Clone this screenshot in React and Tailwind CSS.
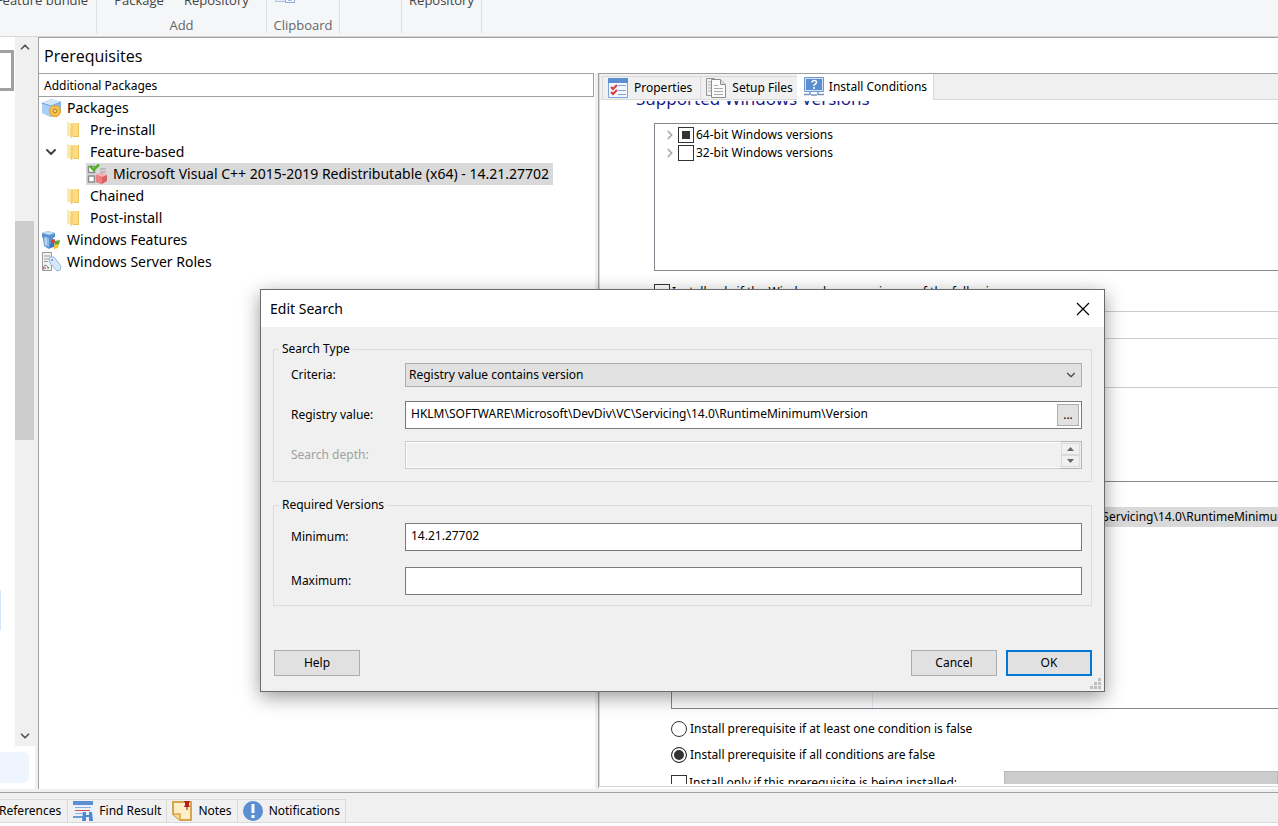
import { useState } from 'react';
import { ChevronDown, ChevronRight, ChevronUp } from 'lucide-react';

const segoe = "font-['Noto_Sans',sans-serif]";

function FolderIcon() {
    return (
        <svg width="20" height="20" viewBox="0 0 20 20">
            <path d="M8 3h6v14H8z" fill="#efc35c" />
            <path d="M8 3h5v13H8z" fill="#fbdc85" />
            <path d="M2 2l5 1.500V15l-2 1-3 .500z" fill="#fdeaa9" />
            <path d="M6 3l2 .500V15l-1 3.500-2-2z" fill="#f5d176" />
        </svg>
    );
}

function PackagesIcon() {
    return (
        <svg width="20" height="20" viewBox="0 0 20 20">
            <path d="M0 5l9-4 10 3v11l-10 4-9-4z" fill="#83b6f2" />
            <path d="M0 5l9-4 10 3-10 4z" fill="#d3e7fb" />
            <path d="M0 5l9 3v11l-9-4z" fill="#a9cef8" />
            <path d="M0 5l9 3 10-4" fill="none" stroke="#6fa3df" />
            <circle cx="13" cy="13" r="5.500" fill="#f5bd41" stroke="#eeb040" strokeWidth="1.500" strokeDasharray="2 1" />
            <circle cx="13" cy="13" r="5" fill="#fac850" stroke="#e3a436" />
            <circle cx="13" cy="13" r="2" fill="#f3d28a" stroke="#a8761b" />
        </svg>
    );
}

function RedistIcon() {
    return (
        <svg width="20" height="20" viewBox="0 0 20 20">
            <path d="M1.500 2.500h6v6h-6zM1.500 12h6v6h-6z" fill="#fff" stroke="#8d8d8d" strokeWidth="1.500" />
            <path d="M13 5h6M13 8h6" stroke="#9b9b9b" />
            <path d="M3 2l3.500 4L12 .500" fill="none" stroke="#4fb51b" strokeWidth="2.500" />
            <path d="M9 11l5-2 6 2v6l-5 3-6-2z" fill="#dc5f62" />
            <path d="M9 11l5-2 6 2-5 2z" fill="#f7b3b3" />
            <path d="M9 11l6 2v7l-6-2z" fill="#ec8181" />
        </svg>
    );
}

function FeaturesIcon() {
    return (
        <svg width="20" height="20" viewBox="0 0 20 20">
            <path d="M0 3l6-2 7 2v4l-2 1 1 8-5 3-5-3-1-8-1-1z" fill="#5b93d0" />
            <path d="M0 3l6-2 7 2-6 2z" fill="#c3dcf5" />
            <path d="M2 7l5 1v9l-5-3z" fill="#8db9e6" />
            <path d="M4 7v9" stroke="#e1f0fd" />
            <path d="M9 10l4-1v4l-4 1z" fill="#d9402f" />
            <path d="M13 11l5-1-1 5-5 1z" fill="#58a83c" />
            <path d="M8 14l4-1v4l-4 1z" fill="#3873cc" />
            <path d="M12 15l5-1-1 4-4 1z" fill="#f3c72c" />
        </svg>
    );
}

function RolesIcon() {
    return (
        <svg width="20" height="20" viewBox="0 0 20 20">
            <path d="M.500.500h9v18h-9z" fill="#f2f2f2" stroke="#999" />
            <path d="M2 4h6M2 7h5M2 9.500h4" stroke="#9c9c9c" />
            <path d="M7 7l1-2 4 0 7 9-1 4-3 1-7-8z" fill="#d8e8fa" stroke="#92b7e4" />
            <circle cx="10" cy="8" r="1" fill="#6c98d1" />
            <path d="M1 18l1-4 2-1 3 3" fill="none" stroke="#888" />
            <path d="M2 16h2" stroke="#d33" />
            <path d="M5 16h2" stroke="#3a3" />
        </svg>
    );
}

function PropertiesIcon() {
    return (
        <svg width="20" height="20" viewBox="0 0 20 20">
            <path d="M.500.500h19v19H.500z" fill="#f4f8fd" stroke="#7aa5dc" />
            <path d="M0 0h20v5H0z" fill="#5b8fd2" />
            <path d="M10 7.500h8M10 12.500h8M10 16.500h8" stroke="#7aa5dc" />
            <path d="M3 9l2 2 4-4M3 14l2 2 4-4" fill="none" stroke="#dc3b3b" strokeWidth="2" />
        </svg>
    );
}

function SetupFilesIcon() {
    return (
        <svg width="20" height="20" viewBox="0 0 20 20">
            <path d="M.500.500h8v17h-8z" fill="#f2f2f2" stroke="#969696" />
            <path d="M2 4h3M2 7h3M2 10h3M2 13h3" stroke="#aaa" />
            <path d="M5.500 1.500h9l5 5v13h-14z" fill="#fafafa" stroke="#8d8d8d" />
            <path d="M14.500 1.500v5h5" fill="#ddd" stroke="#8d8d8d" />
            <path d="M8 7.500h4M8 10.500h9M8 13.500h9M8 16.500h9" stroke="#a8a8a8" />
        </svg>
    );
}

function ConditionsIcon() {
    return (
        <svg width="20" height="20" viewBox="0 0 20 20">
            <path d="M.500.500h19v14H.500z" fill="#d4e2f4" stroke="#6d97d0" />
            <path d="M2 2h16v11H2z" fill="#5b8fd2" />
            <path d="M8 5.500c0-3 5-2.500 4.500 0C12.200 7 10 7 10 9M10 10v2" fill="none" stroke="#fff" strokeWidth="1.500" />
            <path d="M6 15v3M14 15v3M0 17.500h6M14 17.500h6M7 18h6" stroke="#7795bd" strokeWidth="1.500" />
        </svg>
    );
}

function FindIcon() {
    return (
        <svg width="20" height="20" viewBox="0 0 20 20">
            <path d="M0 0h20v17H0z" fill="#e9f1fb" />
            <path d="M0 0h20v4H0z" fill="#5b8fd2" />
            <path d="M2 6.500h16M2 12.500h9" stroke="#8dafdc" />
            <path d="M2 9.500h15" stroke="#dd4a4a" />
            <path d="M0 15h10v2H0z" fill="#6d9ad5" />
            <path d="M10 11h3v3h3v-3h3l1 9h-4v-4h-3v4H9z" fill="#4f88cf" />
        </svg>
    );
}

function NotesIcon() {
    return (
        <svg width="20" height="20" viewBox="0 0 20 20">
            <path d="M1 1h18v18H8l-7-6z" fill="#fdedc9" stroke="#d9a54a" strokeWidth="2" />
            <path d="M1 13h7v6" fill="#fbdc9a" stroke="#d9a54a" strokeWidth="1.500" />
            <path d="M12 0h6l-1 2v2l1 2h-6l1-2V2z" fill="#b81d1d" />
            <path d="M15 6v3" stroke="#8d1111" />
        </svg>
    );
}

function NotificationsIcon() {
    return (
        <svg width="20" height="20" viewBox="0 0 20 20">
            <circle cx="10" cy="10" r="10" fill="#5b8fd2" />
            <path d="M8.500 3h3v9h-3zM8.500 14h3v3h-3z" fill="#fff" />
        </svg>
    );
}

const tree = [
    { label: 'Packages', icon: <PackagesIcon />, pad: 'pl-[3px]' },
    { label: 'Pre-install', icon: <FolderIcon />, pad: 'pl-[26px]' },
    { label: 'Feature-based', icon: <FolderIcon />, pad: 'pl-1', open: true },
    { label: 'Microsoft Visual C++ 2015-2019 Redistributable (x64) - 14.21.27702', icon: <RedistIcon />, pad: 'pl-[47px]', selected: true },
    { label: 'Chained', icon: <FolderIcon />, pad: 'pl-[26px]' },
    { label: 'Post-install', icon: <FolderIcon />, pad: 'pl-[26px]' },
    { label: 'Windows Features', icon: <FeaturesIcon />, pad: 'pl-[3px]' },
    { label: 'Windows Server Roles', icon: <RolesIcon />, pad: 'pl-[3px]' },
];

const registryPath = 'HKLM\\SOFTWARE\\Microsoft\\DevDiv\\VC\\Servicing\\14.0\\RuntimeMinimum\\Version';

function RibbonGroup({ width, label, children }) {
    return (
        <div className={`${width} h-[33px] shrink-0 flex flex-col justify-end gap-[9px] border-r border-[#dcdee0] text-center whitespace-nowrap`}>
            <div className="h-4 shrink-0 leading-4 flex justify-center gap-5 text-[#444]">{children}</div>
            <div className="h-4 shrink-0 leading-4 text-[#666]">{label}</div>
        </div>
    );
}

function Ribbon() {
    return (
        <header className="font-['Open_Sans',sans-serif] h-[37px] shrink-0 flex overflow-hidden bg-[#f4f6f8] border-b border-[#d5d7d9] text-[13px]">
            <RibbonGroup width="w-[97px]"><button className="mr-3">Feature bundle</button></RibbonGroup>
            <RibbonGroup width="w-[170px]" label="Add">
                <button>Package</button>
                <button>Repository</button>
            </RibbonGroup>
            <RibbonGroup width="w-[73px]" label="Clipboard">
                <button aria-label="Copy" className="mr-9">
                    <svg width="20" height="16" viewBox="0 0 20 16">
                        <path d="M.500 1.500h12v8H.500z" fill="#e8effa" stroke="#aabfdf" />
                        <path d="M10.500 1.500h9v9h-9z" fill="#f4f8fd" stroke="#8ea9d6" />
                        <path d="M13 8.500h4" stroke="#a5bce0" />
                    </svg>
                </button>
            </RibbonGroup>
            <RibbonGroup width="w-[62px]" />
            <RibbonGroup width="w-[80px]"><button>Repository</button></RibbonGroup>
        </header>
    );
}

function SideStrip() {
    return (
        <aside className="w-[38px] shrink-0 flex flex-col bg-[#f0f0f0]">
            <div className="flex-1 flex">
                <div className="w-[15px] bg-white pt-[13px]">
                    <div className="w-[14px] h-[41px] border-[3px] border-l-0 border-[#a0a0a0]" />
                    <div className="w-px h-10 mt-[499px] bg-[#d5e4fb]" />
                </div>
                <div className="w-[19px] flex flex-col items-center">
                    <button aria-label="Scroll up" className="h-5 flex items-center"><ChevronUp size={14} strokeWidth={3} color="#555" /></button>
                    <div className="w-full h-[219px] mt-[164px] bg-[#cdcdcd]" />
                    <button aria-label="Scroll down" className="mt-auto h-5 flex items-center"><ChevronDown size={14} strokeWidth={3} color="#555" /></button>
                </div>
            </div>
            <div className="w-[35px] h-[43px] bg-white pt-[6px]">
                <div className="w-[29px] h-[31px] rounded-r-md bg-[#eef5ff]" />
            </div>
        </aside>
    );
}

function PackageTree() {
    return (
        <section className="w-[556px] shrink-0 bg-white">
            <h2 className="mr-px h-6 leading-6 pl-[5px] border-y border-r border-[#a0a0a0]">Additional Packages</h2>
            <ul className={`${segoe} text-[14px] leading-5`}>
                {tree.map(item => (
                    <li key={item.label} className={`h-[22px] flex items-center ${item.pad}`}>
                        {item.open && <ChevronDown size={16} strokeWidth={3} color="#444" className="mr-[6px]" />}
                        <button className={`h-[22px] flex items-center pr-1 whitespace-nowrap ${item.selected ? 'pl-px gap-[6px] bg-[#d9d9d9]' : 'gap-[5px]'}`}>
                            {item.icon}
                            <span>{item.label}</span>
                        </button>
                    </li>
                ))}
            </ul>
        </section>
    );
}

const box = 'appearance-none size-4 shrink-0 border border-[#333] bg-white checked:bg-[#333]';

function Check({ label, ...props }) {
    return (
        <label className="flex items-center gap-[2px] whitespace-nowrap">
            <input type="checkbox" className={`${box} checked:shadow-[inset_0_0_0_3px_white]`} {...props} />
            {label}
        </label>
    );
}

function Radio({ label, ...props }) {
    return (
        <label className="h-[18px] flex items-center gap-[3px] whitespace-nowrap">
            <input type="radio" name="rule" className={`${box} rounded-full checked:shadow-[inset_0_0_0_2px_white]`} {...props} />
            {label}
        </label>
    );
}

function ConditionsPanel() {
    const [rule, setRule] = useState('all');

    return (
        <section className="flex-1 min-w-0 flex flex-col border-l border-t border-[#a0a0a0] border-b-2 border-b-white bg-[#f0f0f0]">
            <div role="tablist" className="h-[26px] shrink-0 flex items-end pl-[2px] border-l border-[#d9d9d9] whitespace-nowrap">
                <button role="tab" className="h-6 flex items-center gap-[6px] pl-[5px] pr-2 border border-r-0 border-[#d9d9d9]"><PropertiesIcon />Properties</button>
                <button role="tab" className="h-6 flex items-center gap-[6px] pl-[5px] pr-1 border border-r-0 border-[#d9d9d9]"><SetupFilesIcon />Setup Files</button>
                <button role="tab" aria-selected="true" className="h-[26px] flex items-center gap-[5px] pl-[7px] pr-[6px] border-r border-[#d9d9d9] bg-white"><ConditionsIcon />Install Conditions</button>
                <div className="flex-1 self-stretch border-b border-[#d9d9d9]" />
            </div>
            <div className="flex-1 min-h-0 flex flex-col pb-[2px] bg-white border-l border-b border-[#d9d9d9]">
                <div className="flex-1 min-h-0 mt-px pl-[54px] flex flex-col overflow-hidden">
                    <div className="h-[22px] shrink-0 flex flex-col">
                        <h2 className="-mt-3 -ml-[18px] h-5 leading-5 text-[17px] text-[#1a1a8c]">Supported Windows Versions</h2>
                    </div>
                    <ul className="h-[148px] shrink-0 border border-r-0 border-[#828790] pt-[2px] pl-2">
                        <li className="h-[18px] flex items-center gap-[1px]"><ChevronRight size={14} strokeWidth={3} color="#aaa" /><Check label="64-bit Windows versions" defaultChecked /></li>
                        <li className="h-[18px] flex items-center gap-[1px]"><ChevronRight size={14} strokeWidth={3} color="#aaa" /><Check label="32-bit Windows versions" /></li>
                    </ul>
                    <div className="mt-3 h-[18px] shrink-0"><Check label="Install only if the Windows language is one of the following:" /></div>
                    <div className="mt-[10px] h-[27px] shrink-0 border-t border-[#ccc]" />
                    <div className="h-[50px] shrink-0 border-y border-[#ccc]" />
                    <div className="mt-[93px] ml-[17px] h-[228px] shrink-0 flex border border-r-0 border-[#828790]">
                        <div className="w-[201px] shrink-0 flex flex-col border-r border-[#e2edf8]" />
                        <div className="flex-1 min-w-0 pt-[25px]">
                            <div className="h-5 leading-5 pl-[5px] overflow-hidden whitespace-nowrap bg-[#d9d9d9]">{registryPath}</div>
                        </div>
                    </div>
                    <div className="mt-[11px] ml-[17px] shrink-0 flex flex-col gap-2">
                        <Radio label="Install prerequisite if at least one condition is false" checked={rule === 'any'} onChange={() => setRule('any')} />
                        <Radio label="Install prerequisite if all conditions are false" checked={rule === 'all'} onChange={() => setRule('all')} />
                    </div>
                    <div className="mt-[7px] ml-[17px] shrink-0 flex items-start">
                        <div className="w-[333px] shrink-0 mt-[3px]"><Check label="Install only if this prerequisite is being installed:" /></div>
                        <select disabled aria-label="Prerequisite" className="appearance-none flex-1 h-6 bg-[#ccc] border border-[#bababa]" />
                    </div>
                </div>
            </div>
        </section>
    );
}

const bottomTabs = [
    { label: 'References' },
    { label: 'Find Result', icon: <FindIcon /> },
    { label: 'Notes', icon: <NotesIcon /> },
    { label: 'Notifications', icon: <NotificationsIcon /> },
];

function BottomTabs() {
    return (
        <footer className="mt-[3px] h-[31px] shrink-0 flex items-end border-t border-b border-t-[#a0a0a0] border-b-[#d9d9d9]">
            {bottomTabs.map(tab => (
                <button key={tab.label} className={`h-[23px] flex items-center gap-[6px] border-t border-r border-[#d9d9d9] ${tab.icon ? 'pl-[5px] pr-[5px]' : 'pr-[6px] -ml-px'}`}>
                    {tab.icon}
                    {tab.label}
                </button>
            ))}
        </footer>
    );
}

const field = 'w-full h-7 px-[5px] pb-1 bg-white border border-[#7a7a7a] outline-none';
const button = 'w-[86px] h-[26px] bg-[#e1e1e1]';

function Row({ id, label, disabled, children }) {
    return (
        <div className="flex items-center">
            <label htmlFor={id} className={`w-[114px] shrink-0 ${disabled ? 'text-[#a0a0a0]' : ''}`}>{label}</label>
            <div className="flex-1 relative">{children}</div>
        </div>
    );
}

function EditSearchDialog() {
    const [path, setPath] = useState(registryPath);
    const [minimum, setMinimum] = useState('14.21.27702');
    const [maximum, setMaximum] = useState('');

    return (
        <div role="dialog" aria-label="Edit Search" className="absolute left-[260px] top-[289px] w-[845px] bg-[#f0f0f0] border border-[#6b6b6b] shadow-[0_5px_18px_rgba(0,0,0,0.4)]">
            <div className={`${segoe} h-[37px] flex items-center justify-between pl-[9px] pr-[14px] bg-white text-[14px]`}>
                <h1>Edit Search</h1>
                <button aria-label="Close">
                    <svg width="14" height="14" viewBox="0 0 14 14"><path d="M1 1l12 12M13 1L1 13" stroke="#000" strokeWidth="1.200" /></svg>
                </button>
            </div>

            <form className="px-3 pb-[15px] pt-[14px]" onSubmit={e => e.preventDefault()}>
                <fieldset className="border border-[#dcdcdc] pl-[17px] pr-[9px] pb-3">
                    <legend className="-ml-[12px] px-[3px] h-4 leading-4">Search Type</legend>
                    <div className="mt-[6px] flex flex-col">
                        <Row id="criteria" label="Criteria:">
                            <select id="criteria" className="appearance-none w-full h-6 px-[3px] bg-[#e1e1e1] border border-[#adadad]">
                                <option>Registry value contains version</option>
                            </select>
                            <ChevronDown size={14} strokeWidth={2} color="#444" className="absolute right-1 top-[5px] pointer-events-none" />
                        </Row>
                        <div className="mt-[14px]">
                            <Row id="path" label="Registry value:">
                                <input id="path" className={field} value={path} onChange={e => setPath(e.target.value)} />
                                <button type="button" aria-label="Browse" className="absolute right-[3px] top-[3px] w-[22px] h-[22px] bg-[#e1e1e1] border border-[#adadad] leading-4">...</button>
                            </Row>
                        </div>
                        <div className="mt-3">
                            <Row id="depth" label="Search depth:" disabled>
                                <input id="depth" disabled className="block w-full h-7 bg-[#f0f0f0] border border-[#ccc] shadow-[inset_0_0_0_1px_white]" />
                                <div className="absolute right-0 top-0 w-[22px] h-7 p-px flex flex-col border border-l-0 border-[#b5b5b5] bg-[#f0f0f0]">
                                    <button type="button" disabled aria-label="Increase" className="flex-1 flex items-center justify-center border border-[#dadada]">
                                        <svg width="7" height="4" viewBox="0 0 7 4"><path d="M0 4l3.500-4L7 4z" fill="#666" /></svg>
                                    </button>
                                    <button type="button" disabled aria-label="Decrease" className="flex-1 flex items-center justify-center border border-[#dadada]">
                                        <svg width="7" height="4" viewBox="0 0 7 4"><path d="M0 0l3.500 4L7 0z" fill="#666" /></svg>
                                    </button>
                                </div>
                            </Row>
                        </div>
                    </div>
                </fieldset>

                <fieldset className="mt-[15px] border border-[#dcdcdc] pl-[17px] pr-[9px] pb-[10px]">
                    <legend className="-ml-[12px] px-[3px] h-4 leading-4">Required Versions</legend>
                    <div className="mt-[10px] flex flex-col gap-4">
                        <Row id="minimum" label="Minimum:">
                            <input id="minimum" className={`${field} block`} value={minimum} onChange={e => setMinimum(e.target.value)} />
                        </Row>
                        <Row id="maximum" label="Maximum:">
                            <input id="maximum" className={`${field} block`} value={maximum} onChange={e => setMaximum(e.target.value)} />
                        </Row>
                    </div>
                </fieldset>

                <div className="mt-11 pl-px flex gap-[9px]">
                    <button type="button" className={`${button} mr-auto border border-[#adadad]`}>Help</button>
                    <button type="button" className={`${button} border border-[#adadad]`}>Cancel</button>
                    <button type="submit" className={`${button} border-2 border-[#0078d7]`}>OK</button>
                </div>
            </form>

            <svg width="11" height="11" viewBox="0 0 11 11" fill="#bfbfbf" className="absolute right-[3px] bottom-[2px]">
                <path d="M8 0h3v3H8zM4 4h3v3H4zM8 4h3v3H8zM0 8h3v3H0zM4 8h3v3H4zM8 8h3v3H8z" />
            </svg>
        </div>
    );
}

export default function App() {
    return (
        <div className="relative h-screen pb-[3px] flex flex-col overflow-hidden bg-white font-['Noto_Sans',sans-serif] text-[12px] leading-[18px] text-black">
            <div className="flex-1 min-h-0 flex flex-col bg-[#f0f0f0]">
                <Ribbon />
                <div className="flex-1 min-h-0 flex">
                    <SideStrip />
                    <main className="flex-1 min-w-0 flex flex-col border-l border-t border-[#a0a0a0]">
                        <h1 className="font-['Open_Sans',sans-serif] h-[35px] shrink-0 leading-9 pl-[5px] bg-white text-[16px]">Prerequisites</h1>
                        <div className="flex-1 min-h-0 flex gap-[3px]">
                            <PackageTree />
                            <ConditionsPanel />
                        </div>
                    </main>
                </div>
                <BottomTabs />
            </div>
            <EditSearchDialog />
        </div>
    );
}
